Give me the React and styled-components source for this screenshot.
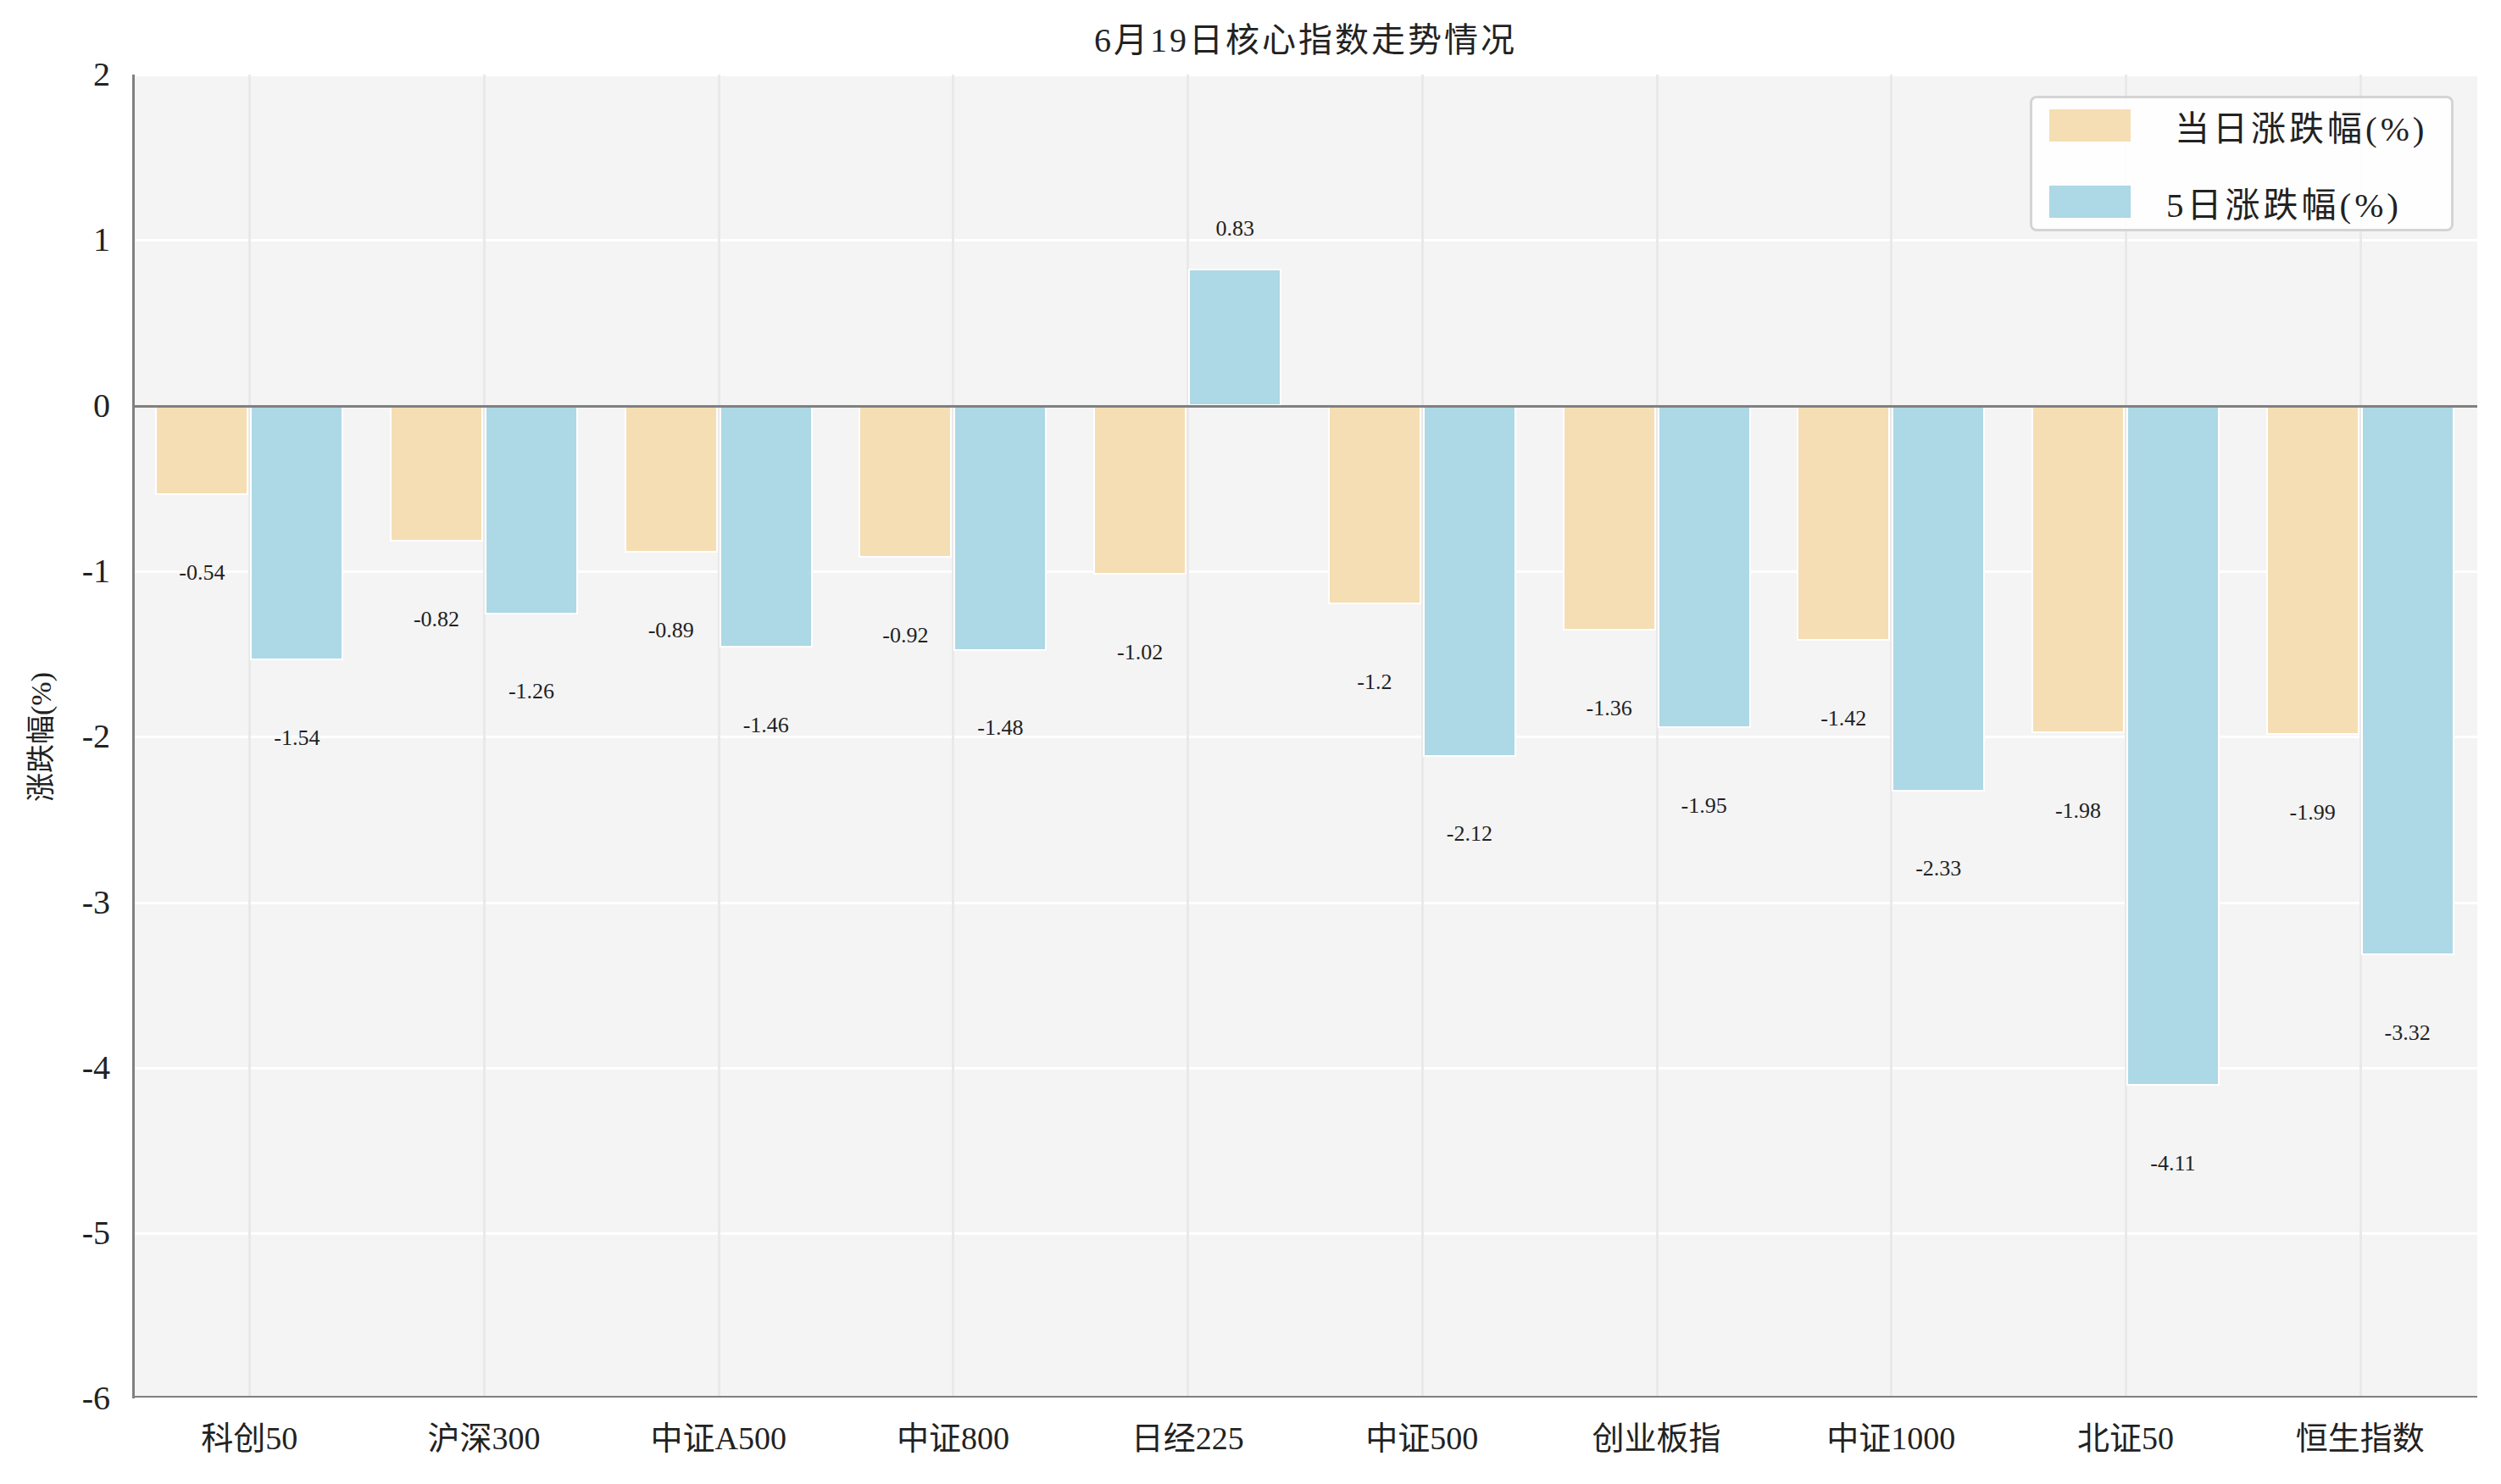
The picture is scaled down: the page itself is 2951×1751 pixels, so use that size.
import React from 'react';
import styled, { createGlobalStyle } from 'styled-components';

const UNIT = 195.3;
const MAX = 2;
const MIN = -6;
const PLOT_H = UNIT * (MAX - MIN);
const ZERO = UNIT * MAX;

const data = [
  { name: '科创50', day: -0.54, five: -1.54 },
  { name: '沪深300', day: -0.82, five: -1.26 },
  { name: '中证A500', day: -0.89, five: -1.46 },
  { name: '中证800', day: -0.92, five: -1.48 },
  { name: '日经225', day: -1.02, five: 0.83 },
  { name: '中证500', day: -1.2, five: -2.12 },
  { name: '创业板指', day: -1.36, five: -1.95 },
  { name: '中证1000', day: -1.42, five: -2.33 },
  { name: '北证50', day: -1.98, five: -4.11 },
  { name: '恒生指数', day: -1.99, five: -3.32 },
];

const ticks = [2, 1, 0, -1, -2, -3, -4, -5, -6];

const FONT = `"Liberation Serif", "Noto Sans CJK SC", serif`;

const Global = createGlobalStyle`
  html, body { margin: 0; padding: 0; background: #fff; }
  body { font-family: ${FONT}; color: #222; }
`;

const Page = styled.div`
  width: 2951px;
  height: 1751px;
  display: flex;
  flex-direction: column;
`;

const Title = styled.div`
  height: 88px;
  display: flex;
  align-items: center;
  justify-content: center;
  padding-left: 130px;
  font-size: 40px;
  letter-spacing: 3px;
`;

const Body = styled.div`
  display: flex;
`;

const YSide = styled.div`
  width: 156px;
  display: flex;
`;

const YLabel = styled.div`
  width: 90px;
  display: flex;
  align-items: center;
  justify-content: center;
  span {
    transform: rotate(-90deg);
    white-space: nowrap;
    font-size: 34px;
  }
`;

const YTicks = styled.div`
  position: relative;
  flex: 1;
  height: ${PLOT_H}px;
`;

const Tick = styled.div`
  position: absolute;
  right: 26px;
  transform: translateY(-50%);
  font-size: 40px;
  line-height: 1;
`;

const Plot = styled.div`
  position: relative;
  width: 2767px;
  height: ${PLOT_H}px;
  background: #f4f4f4;
  border-left: 3px solid #808080;
  border-bottom: 3px solid #808080;
  box-sizing: border-box;
  display: flex;
`;

const HGrid = styled.div`
  position: absolute;
  left: 0;
  right: 0;
  height: 3px;
  margin-top: -1px;
  background: ${({ $zero }) => ($zero ? '#808080' : '#fff')};
  z-index: ${({ $zero }) => ($zero ? 3 : 0)};
`;

const Slot = styled.div`
  position: relative;
  flex: 1;
  margin-left: ${({ $first }) => ($first ? '-3px' : '0')};
  &::before {
    content: '';
    position: absolute;
    top: 0;
    bottom: 0;
    left: 50%;
    width: 3px;
    margin-left: -1px;
    background: #e9e9e9;
  }
`;

const Bar = styled.div`
  position: absolute;
  width: 110px;
  box-sizing: border-box;
  border: 2px solid #fff;
  background: ${({ $five }) => ($five ? '#add8e6' : '#f5deb3')};
  left: ${({ $five }) => ($five ? 'calc(50% + 1px)' : 'calc(50% - 111px)')};
  z-index: 2;
`;

const Value = styled.div`
  position: absolute;
  width: 110px;
  text-align: center;
  transform: translateY(-50%);
  font-size: 26px;
  color: #222;
  left: ${({ $five }) => ($five ? 'calc(50% + 1px)' : 'calc(50% - 111px)')};
  z-index: 4;
`;

const Legend = styled.div`
  position: absolute;
  top: 25px;
  right: 28px;
  width: 500px;
  height: 160px;
  box-sizing: border-box;
  border: 3px solid #d4d4d4;
  border-radius: 8px;
  background: rgba(255, 255, 255, 0.85);
  display: flex;
  flex-direction: column;
  justify-content: center;
  gap: 30px;
  padding: 0 20px;
  z-index: 5;
`;

const LegendRow = styled.div`
  display: flex;
  align-items: center;
  gap: ${({ $gap }) => $gap}px;
  font-size: 41px;
  letter-spacing: 4px;
`;

const Swatch = styled.div`
  width: 96px;
  height: 38px;
  background: ${({ $c }) => $c};
`;

const XAxis = styled.div`
  margin-left: 156px;
  width: 2767px;
  display: flex;
  padding-top: 16px;
`;

const XLabel = styled.div`
  flex: 1;
  text-align: center;
  font-size: 38px;
`;

const top = (v) => (v < 0 ? ZERO : ZERO - v * UNIT);

export default function App() {
  return (
    <Page>
      <Global />
      <Title>6月19日核心指数走势情况</Title>
      <Body>
        <YSide>
          <YLabel><span>涨跌幅(%)</span></YLabel>
          <YTicks>
            {ticks.map((t) => (
              <Tick key={t} style={{ top: ZERO - t * UNIT }}>{t}</Tick>
            ))}
          </YTicks>
        </YSide>
        <Plot>
          {ticks.map((t) => (
            <HGrid key={t} $zero={t === 0} style={{ top: ZERO - t * UNIT }} />
          ))}
          {data.map((d, i) => (
            <Slot key={d.name} $first={i === 0}>
              {[['day', false], ['five', true]].map(([k, f]) => (
                <React.Fragment key={k}>
                  <Bar $five={f} style={{ top: top(d[k]), height: Math.abs(d[k]) * UNIT }} />
                  <Value $five={f} style={{ top: ZERO - (d[k] < 0 ? d[k] - 0.47 : d[k] + 0.24) * UNIT }}>
                    {d[k]}
                  </Value>
                </React.Fragment>
              ))}
            </Slot>
          ))}
          <Legend>
            <LegendRow $gap={52}>
              <Swatch $c="#f5deb3" />
              当日涨跌幅(%)
            </LegendRow>
            <LegendRow $gap={42}>
              <Swatch $c="#add8e6" />
              5日涨跌幅(%)
            </LegendRow>
          </Legend>
        </Plot>
      </Body>
      <XAxis>
        {data.map((d) => (
          <XLabel key={d.name}>{d.name}</XLabel>
        ))}
      </XAxis>
    </Page>
  );
}
